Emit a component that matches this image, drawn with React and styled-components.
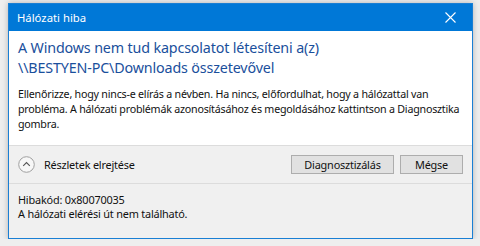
import React from "react";
import styled, { createGlobalStyle } from "styled-components";

const Global = createGlobalStyle`
  html, body {
    margin: 0;
    background: #eeeeee;
  }
  body {
    padding: 3px 0 0 8px;
    font-family: "Noto Sans", "Open Sans", sans-serif;
  }
`;

const Window = styled.div`
  width: 465px;
  height: 236px;
  box-sizing: border-box;
  border: 1px solid #1a7fd4;
  background: #f0f0f0;
  display: flex;
  flex-direction: column;
  box-shadow: 0 0 6px rgba(0, 0, 0, 0.25);
`;

const TitleBar = styled.div`
  height: 27px;
  background: #0078d7;
  color: #fff;
  display: flex;
  align-items: center;
  justify-content: space-between;
  padding: 0 8px 0 8px;
  font-size: 11.3px;
`;

const Close = styled.div`
  width: 28px;
  display: flex;
  justify-content: center;
  align-items: center;
`;

const Main = styled.div`
  background: #fff;
  padding: 7px 10px 13px 9px;
`;

const Heading = styled.div`
  color: #1a4f9c;
  font-size: 14.3px;
  letter-spacing: -0.15px;
  line-height: 20px;
  white-space: nowrap;
`;

const Body = styled.div`
  margin-top: 9px;
  font-size: 10.7px;
  letter-spacing: -0.22px;
  line-height: 15px;
  color: #111;
  white-space: nowrap;
`;

const ActionRow = styled.div`
  display: flex;
  align-items: center;
  justify-content: space-between;
  height: 37px;
  padding: 0 9px 0 9px;
  border-top: 1px solid #dcdcdc;
  border-bottom: 1px solid #dcdcdc;
`;

const Toggle = styled.div`
  display: flex;
  align-items: center;
  gap: 9px;
  font-size: 10.9px;
  letter-spacing: -0.2px;
  color: #111;
`;

const Buttons = styled.div`
  display: flex;
  gap: 6px;
`;

const Button = styled.div`
  width: ${(p) => p.w}px;
  height: 17px;
  box-sizing: content-box;
  border: 1px solid #adadad;
  background: #e1e1e1;
  font-size: 10.9px;
  letter-spacing: -0.2px;
  display: flex;
  align-items: center;
  justify-content: center;
  color: #111;
`;

const Details = styled.div`
  padding: 9px 9px;
  font-size: 10.9px;
  letter-spacing: -0.2px;
  line-height: 14px;
  color: #111;
`;

export default function App() {
  return (
    <>
      <Global />
      <Window>
        <TitleBar>
          <span>Hálózati hiba</span>
          <Close>
            <svg width="11" height="11" viewBox="0 0 11 11">
              <path d="M0.5 0.5 L10.5 10.5 M10.5 0.5 L0.5 10.5" stroke="#fff" strokeWidth="1.1" />
            </svg>
          </Close>
        </TitleBar>
        <Main>
          <Heading>
            A Windows nem tud kapcsolatot létesíteni a(z)
            <br />
            \\BESTYEN-PC\Downloads összetevővel
          </Heading>
          <Body>
            Ellenőrizze, hogy nincs-e elírás a névben. Ha nincs, előfordulhat, hogy a hálózattal van
            <br />
            probléma. A hálózati problémák azonosításához és megoldásához kattintson a Diagnosztika
            <br />
            gombra.
          </Body>
        </Main>
        <ActionRow>
          <Toggle>
            <svg width="17" height="17" viewBox="0 0 17 17">
              <circle cx="8.5" cy="8.5" r="7.8" fill="#f7f7f7" stroke="#a0a0a0" strokeWidth="1" />
              <path d="M5.2 9.8 L8.5 6.5 L11.8 9.8" fill="none" stroke="#555" strokeWidth="1.1" />
            </svg>
            <span>Részletek elrejtése</span>
          </Toggle>
          <Buttons>
            <Button w={101}>Diagnosztizálás</Button>
            <Button w={61}>Mégse</Button>
          </Buttons>
        </ActionRow>
        <Details>
          Hibakód: 0x80070035
          <br />
          A hálózati elérési út nem található.
        </Details>
      </Window>
    </>
  );
}
